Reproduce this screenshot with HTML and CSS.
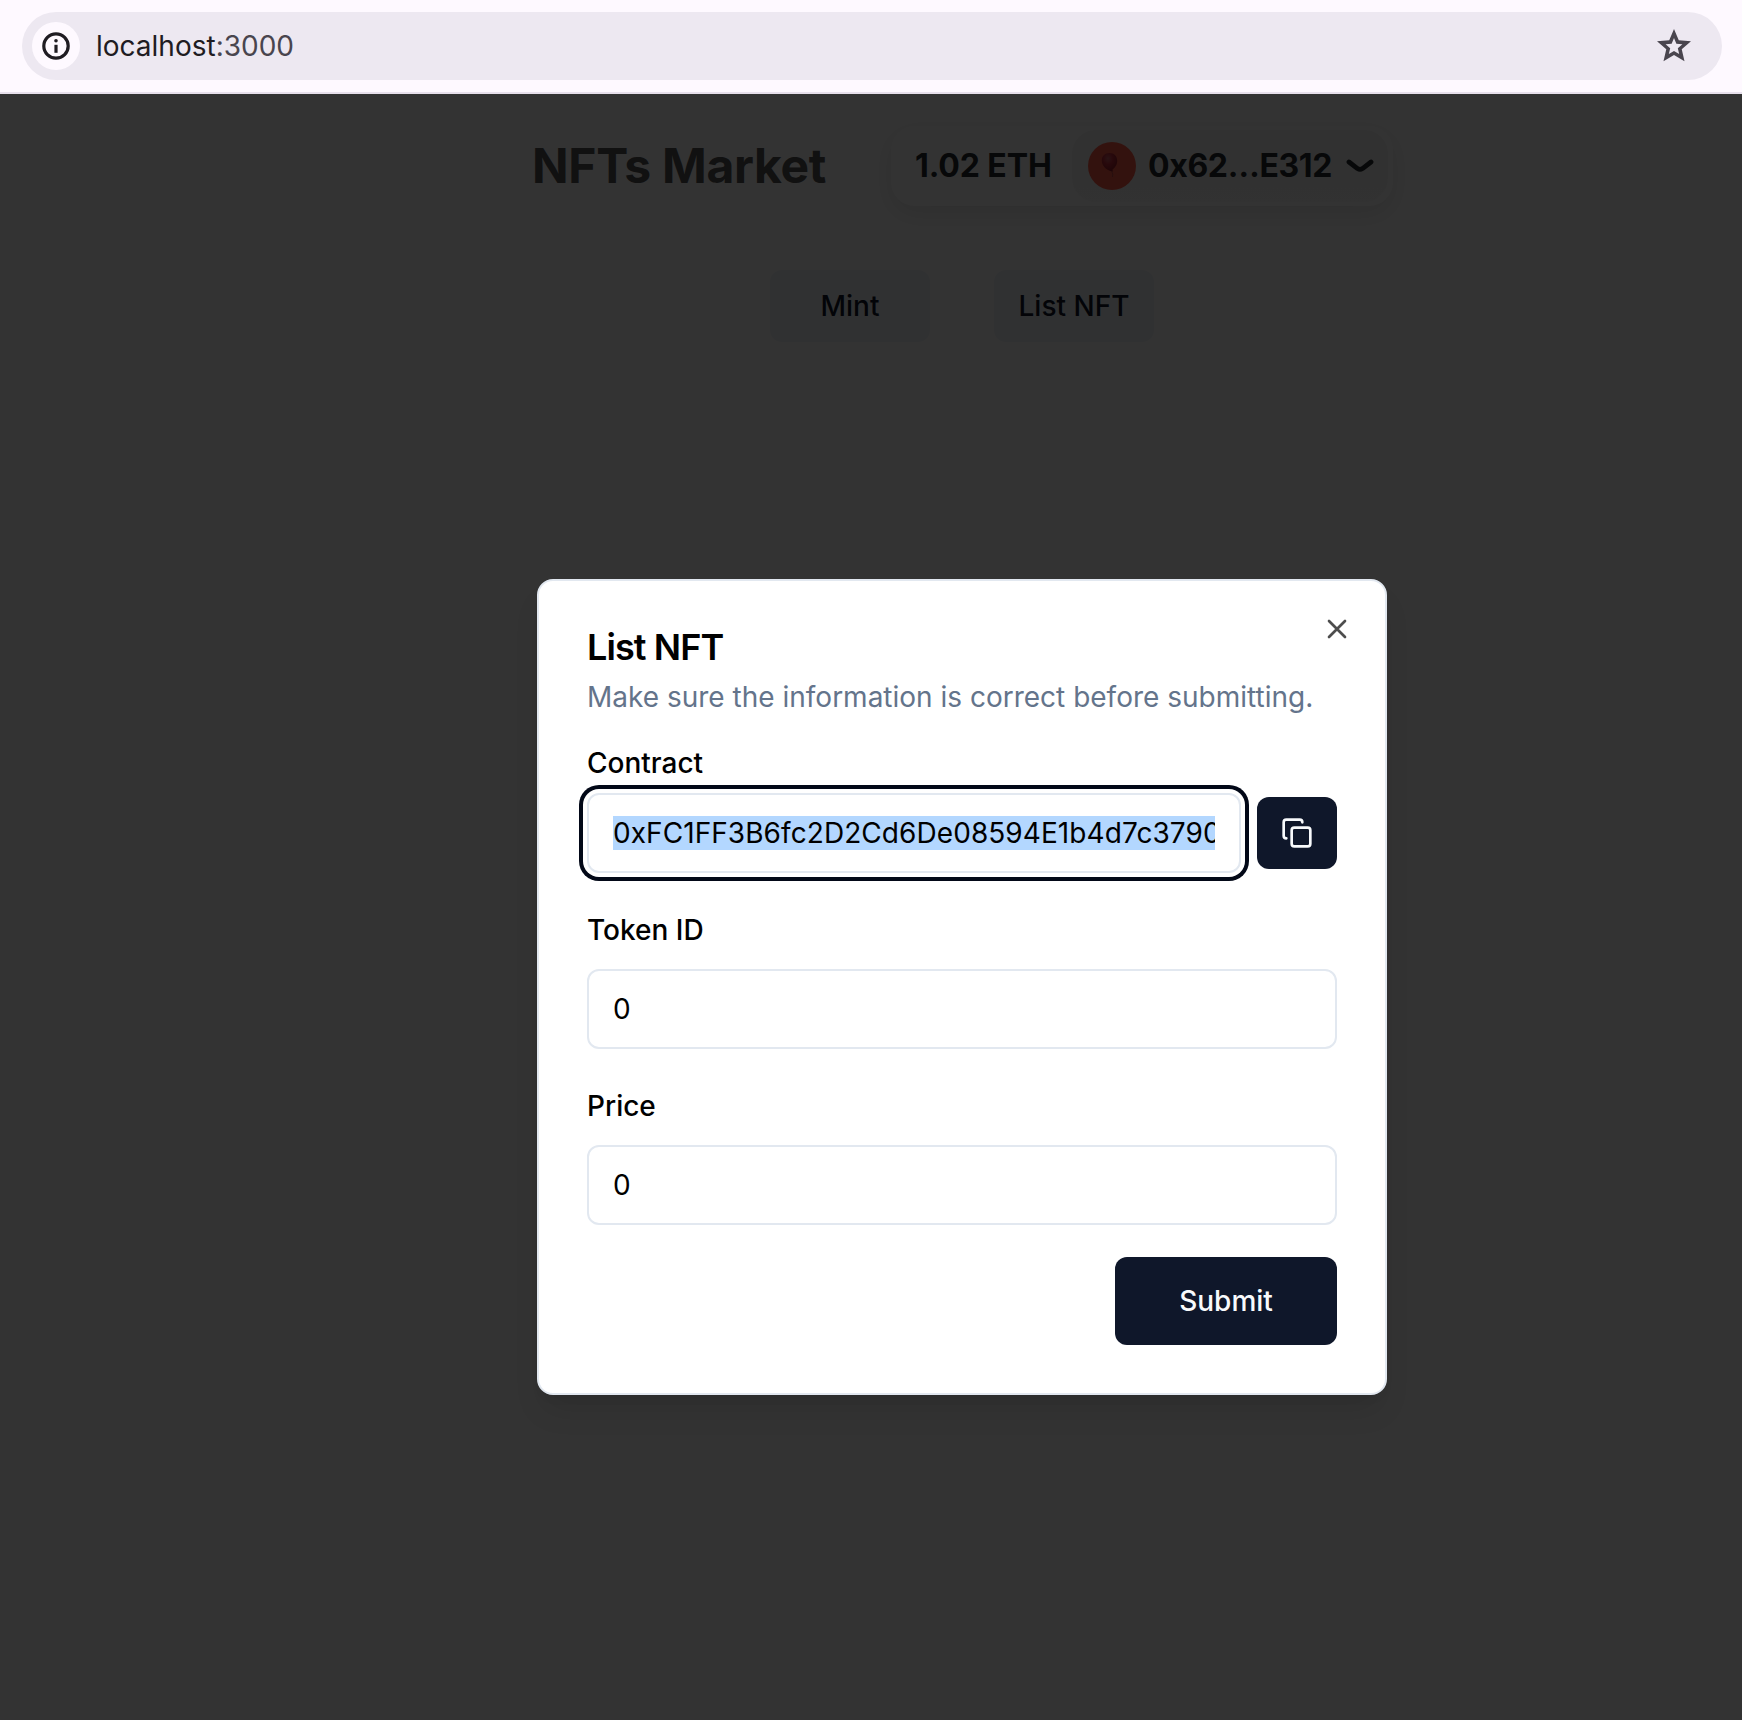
FILE: index.html
```html
<!DOCTYPE html>
<html lang="en">
<head>
<meta charset="utf-8">
<title>NFTs Market</title>
<link rel="stylesheet" href="styles.css">
</head>
<body>
<div class="toolbar">
  <div class="omnibox">
    <span class="site-info">
      <svg width="28" height="28" viewBox="0 0 28 28" fill="none" stroke="#1f1c22">
        <circle cx="14" cy="14" r="12.2" stroke-width="3.2"/>
        <path d="M14 12.8v8" stroke-width="3.2"/>
        <circle cx="14" cy="8.8" r="1.8" fill="#1f1c22" stroke="none"/>
      </svg>
    </span>
    <span class="url">localhost<span class="port">:3000</span></span>
    <svg class="star" width="34" height="34" viewBox="2 2 20 20">
      <path fill="#49454e" fill-rule="evenodd" d="M22 9.240l-7.190-.62L12 2 9.190 8.630 2 9.240l5.460 4.730L5.820 21 12 17.270 18.180 21l-1.630-7.030L22 9.240zM12 14.900l-3.050 1.840.81-3.470-2.690-2.330 3.550-.31L12 7.360l1.380 3.270 3.550.31-2.690 2.330.81 3.470L12 14.900z"/>
    </svg>
  </div>
</div>
<div class="viewport">
  <div class="page">
    <header class="header">
      <h1 class="brand">NFTs Market</h1>
      <div class="account">
        <span class="balance">1.02 ETH</span>
        <button class="wallet">
          <span class="avatar">
            <svg width="48" height="48" viewBox="0 0 48 48">
              <defs><radialGradient id="balloon" cx=".4" cy=".3" r=".7"><stop offset="0" stop-color="#d06068"/><stop offset=".45" stop-color="#c42c3c"/><stop offset="1" stop-color="#981c28"/></radialGradient></defs>
              <path fill="none" stroke="#c04848" stroke-width="1" d="M23.500 29q2 3 1 6"/>
              <path fill="url(#balloon)" d="M21.500 11c4.700 0 7.700 3.400 7.700 7.700c0 4.300-2.400 7-4.800 9l.7 1.800l-2.900-.5c-4-1.500-8.400-5.500-8.400-10.300c0-4.500 3-7.700 7.700-7.700z"/>
            </svg>
          </span>
          <span class="address">0x62…E312</span>
          <svg class="chevron" width="28" height="14" viewBox="0 0 28 14" fill="none" stroke="#25292e" stroke-width="4.800" stroke-linecap="round" stroke-linejoin="round"><path d="M3 3L11.500 9.600Q14 11.200 16.500 9.600L25 3"/></svg>
        </button>
      </div>
    </header>
    <nav class="actions">
      <button class="action">Mint</button>
      <button class="action">List NFT</button>
    </nav>
  </div>
  <div class="overlay">
    <form class="dialog">
      <svg class="close" width="32" height="32" viewBox="0 0 24 24" fill="none" stroke="#4d4d4d" stroke-width="2" stroke-linecap="round"><path d="M18 6L6 18M6 6l12 12"/></svg>
      <div class="dialog-header">
        <h2 class="title">List NFT</h2>
        <p class="description">Make sure the information is correct before submitting.</p>
      </div>
      <div class="contract">
        <label class="label-tight">Contract</label>
        <div class="contract-row">
          <div class="input focused"><span class="value"><span class="selection">0xFC1FF3B6fc2D2Cd6De08594E1b4d7c3790</span></span></div>
          <button class="copy" type="button">
            <svg width="32" height="32" viewBox="0 0 24 24" fill="none" stroke="#f8fafc" stroke-width="2" stroke-linecap="round" stroke-linejoin="round"><rect width="14" height="14" x="8" y="8" rx="2"/><path d="M4 16c-1.100 0-2-.9-2-2V4c0-1.100.9-2 2-2h10c1.100 0 2 .9 2 2"/></svg>
          </button>
        </div>
      </div>
      <div class="field"><label class="label">Token ID</label><div class="input">0</div></div>
      <div class="field"><label class="label">Price</label><div class="input">0</div></div>
      <button class="submit" type="button">Submit</button>
    </form>
  </div>
</div>
</body>
</html>
```
FILE: styles.css
```css
* { box-sizing: border-box; margin: 0; padding: 0; }
body { width: 1742px; height: 1720px; overflow: hidden; background: #fff; color: #000; font-family: Inter, "Liberation Sans", sans-serif; font-size: 28px; line-height: 40px; }
button { border: 0; font: inherit; color: inherit; }
svg { display: block; flex: none; }

.toolbar { height: 94px; padding: 12px 20px 0 22px; background: #fef9ff; border-bottom: 2px solid #e7e0ec; }
.omnibox { display: flex; align-items: center; height: 68px; padding: 0 31px 0 10px; border-radius: 34px; background: #ede8f1; }
.site-info { display: flex; align-items: center; justify-content: center; width: 48px; height: 48px; border-radius: 50%; background: #fef9ff; }
.url { flex: 1; margin-left: 16px; color: #1f1c22; font-size: 28px; }
.port { color: #49454e; }

.viewport { display: grid; height: 1626px; }
.page, .overlay { grid-area: 1 / 1; }
.page { background: #fff; }
.header { display: flex; align-items: center; height: 80px; margin-top: 32px; padding-left: 532px; }
.brand { width: 359px; font-size: 48px; font-weight: 700; line-height: 64px; letter-spacing: -.3px; color: #555; white-space: nowrap; }
.account { display: flex; align-items: center; width: 502px; height: 80px; border-radius: 24px; box-shadow: 0 8px 24px rgba(0, 0, 0, .1); color: #25292e; font-size: 32px; font-weight: 700; white-space: nowrap; }
.balance { width: 181px; padding-left: 24px; letter-spacing: -.1px; }
.wallet { display: flex; align-items: center; width: 316px; height: 72px; padding: 0 14px 0 16px; border-radius: 24px; background: linear-gradient(#f2f2f2, #f7f7f7); }
.avatar { width: 48px; height: 48px; border-radius: 50%; background: #fc5c48; }
.address { flex: 1; margin-left: 12px; text-align: left; letter-spacing: -.35px; }
.actions { display: flex; gap: 64px; margin: 64px 0 0 770px; }
.action { width: 160px; height: 72px; border-radius: 12px; background: #f1f5f9; color: #0f172a; font-weight: 500; }

.overlay { position: relative; padding: 485px 0 0 537px; background: rgba(0, 0, 0, .8); }
.dialog { position: relative; display: flex; flex-direction: column; gap: 32px; width: 850px; height: 816px; padding: 48px; border: 2px solid #e2e8f0; border-radius: 16px; background: #fff; box-shadow: 0 20px 30px -6px rgba(0, 0, 0, .1), 0 8px 12px -8px rgba(0, 0, 0, .1); }
.close { position: absolute; top: 32px; right: 32px; }
.dialog-header { display: flex; flex-direction: column; gap: 12px; }
.title { font-size: 36px; line-height: 36px; font-weight: 600; letter-spacing: -.025em; }
.description { color: #64748b; white-space: nowrap; }
.contract { display: flex; flex-direction: column; gap: 16px; }
.label-tight { line-height: 28px; font-weight: 500; }
.contract-row { display: flex; align-items: center; gap: 16px; }
.field { display: flex; flex-direction: column; gap: 16px; }
.label { height: 48px; padding-top: 1px; line-height: 48px; font-weight: 500; }
.input { height: 80px; padding: 18px 24px; border: 2px solid #e2e8f0; border-radius: 12px; background: #fff; }
.focused { width: 654px; box-shadow: 0 0 0 4px #fff, 0 0 0 8px #020817; }
.value { display: block; height: 34px; margin-top: 3px; overflow: hidden; line-height: 34px; letter-spacing: .07px; white-space: nowrap; }
.selection { display: inline-block; background: #b3d7ff; }
.copy { display: flex; align-items: center; justify-content: center; width: 80px; height: 72px; border-radius: 12px; background: #0f172a; }
.submit { align-self: flex-end; width: 222px; height: 88px; border-radius: 12px; background: #0f172a; color: #f8fafc; font-weight: 500; }
```
